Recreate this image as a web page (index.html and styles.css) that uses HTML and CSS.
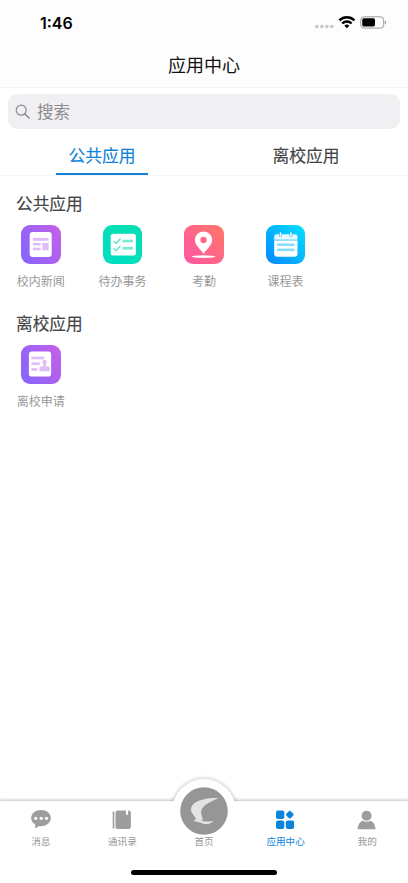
FILE: index.html
```html
<!DOCTYPE html>
<html lang="zh-CN">
<head>
    <meta charset="UTF-8">
    <meta name="viewport" content="width=device-width, initial-scale=1.0">
    <title>应用中心</title>
    <link rel="stylesheet" href="styles.css">
</head>
<body>
    <div class="page">
        <div class="status-bar">
            <span class="time">1:46</span>
            <svg class="status-icons" width="72" height="16" viewBox="0 0 72 16">
                <g fill="#c6c6c6">
                    <circle cx="2.8" cy="11.5" r="1.8"/>
                    <circle cx="7.8" cy="11.5" r="1.8"/>
                    <circle cx="12.8" cy="11.5" r="1.8"/>
                    <circle cx="17.8" cy="11.5" r="1.8"/>
                </g>
                <g fill="none" stroke="#000" stroke-width="2.4">
                    <path d="M25.4 5.3a10.8 10.8 0 0 1 15 0"/>
                    <path d="M28.2 8.5a6.7 6.7 0 0 1 9.4 0"/>
                </g>
                <path d="M32.9 13.2l-2.5-2.5a3.6 3.6 0 0 1 5 0z"/>
                <rect x="46.7" y="1.8" width="23" height="11.3" rx="3.4" fill="none" stroke="#9b9b9b"/>
                <rect x="48.2" y="3.3" width="12.8" height="8.3" rx="1.8"/>
                <path d="M70.8 5.6q1.3.4 1.3 1.9t-1.3 1.9z" fill="#9b9b9b"/>
            </svg>
        </div>
        <h1 class="title">应用中心</h1>

        <div class="search">
            <svg width="16" height="16" viewBox="0 0 16 16" fill="none" stroke="#8c8c90" stroke-width="1.2" stroke-linecap="round">
                <circle cx="6.2" cy="6.2" r="5"/>
                <path d="M9.9 9.9l4.2 4.1" stroke-width="1.6"/>
            </svg>
            <span>搜索</span>
        </div>

        <div class="tabs">
            <div class="tab active"><span>公共应用</span></div>
            <div class="tab"><span>离校应用</span></div>
        </div>

        <div class="section">
            <h2>公共应用</h2>
            <div class="apps">
                <div class="app">
                    <div class="icon purple">
                        <svg viewBox="0 0 40 40">
                            <rect x="8.8" y="7.1" width="22.3" height="25.2" rx="3" fill="#fff"/>
                            <g fill="#dfbdfb">
                                <rect x="12" y="13" width="16" height="3"/>
                                <rect x="12" y="18.2" width="8" height="2.6"/>
                                <rect x="12" y="23" width="8" height="2.6"/>
                                <rect x="21.6" y="18.2" width="6.4" height="7.4"/>
                            </g>
                        </svg>
                    </div>
                    <p>校内新闻</p>
                </div>
                <div class="app">
                    <div class="icon green">
                        <svg viewBox="0 0 40 40">
                            <rect x="7.8" y="8.8" width="25.5" height="22.2" rx="2.6" fill="#fff"/>
                            <g fill="#79ebd5">
                                <rect x="19.7" y="14.9" width="10.6" height="2.7"/>
                                <rect x="19.7" y="22.2" width="10.6" height="2.7"/>
                            </g>
                            <path d="M10.7 16.3l2.4 2.4 4.6-4.8M10.7 23.6l2.4 2.4 4.6-4.8" fill="none" stroke="#3fe2c4" stroke-width="1.2"/>
                        </svg>
                    </div>
                    <p>待办事务</p>
                </div>
                <div class="app">
                    <div class="icon pink">
                        <svg viewBox="0 0 40 40">
                            <path fill="#fff" fill-rule="evenodd" d="M19.8 6.5c-4.9 0-8.7 3.7-8.7 8.5 0 6.1 5.4 9 8.7 14.3 3.3-5.3 8.7-8.2 8.7-14.3 0-4.8-3.8-8.5-8.7-8.5zm0 5.5a3.2 3.2 0 1 1 0 6.4 3.2 3.2 0 0 1 0-6.4z"/>
                            <ellipse cx="19.8" cy="32" rx="12.2" ry="1.3" fill="#fff"/>
                        </svg>
                    </div>
                    <p>考勤</p>
                </div>
                <div class="app">
                    <div class="icon blue">
                        <svg viewBox="0 0 40 40">
                            <path d="M8.3 14.2V12a2.6 2.6 0 0 1 2.6-2.6h18.4a2.6 2.6 0 0 1 2.6 2.6v2.2z" fill="#e9faff"/>
                            <path d="M8.3 15.8h23.6v13.3a3 3 0 0 1-3 3H11.3a3 3 0 0 1-3-3z" fill="#fff"/>
                            <path d="M8.3 14.2h23.6v1.6H8.3z" fill="#a3e4ff"/>
                            <path d="M14.7 9v1.6M25.2 9v1.6" stroke="#39b9ff" stroke-width="3.2" stroke-linecap="round"/>
                            <path d="M14.7 8v3.2M25.2 8v3.2" stroke="#fff" stroke-width="1.5" stroke-linecap="round"/>
                            <g fill="#82dcfb">
                                <rect x="11.3" y="18.7" width="17.6" height="2.5"/>
                                <rect x="11.3" y="23.9" width="17.6" height="2.5"/>
                            </g>
                        </svg>
                    </div>
                    <p>课程表</p>
                </div>
            </div>
        </div>

        <div class="section">
            <h2>离校应用</h2>
            <div class="apps">
                <div class="app">
                    <div class="icon purple">
                        <svg viewBox="0 0 40 40">
                            <rect x="8" y="6.5" width="22.5" height="25.5" rx="3" fill="#fff"/>
                            <g fill="#dfbdfb">
                                <rect x="10.5" y="11.8" width="13" height="2.7"/>
                                <rect x="10.5" y="17.6" width="8.4" height="2.7"/>
                                <rect x="10.5" y="23.4" width="6" height="2.7"/>
                                <path d="M18.7 26.6v-3.4q0-1.5 1.6-1.5h1.6q1.1 0 .5-2.6a2.3 2.3 0 1 1 3 0q-.5 2.6.6 2.6h1.5q1.700 0 1.700 1.500v3.400z"/>
                            </g>
                        </svg>
                    </div>
                    <p>离校申请</p>
                </div>
            </div>
        </div>

        <div class="tabbar">
            <div class="hump"></div>
            <div class="bar-item">
                <svg width="24" height="24" viewBox="0 0 24 24">
                    <path fill="#9d9d9d" d="M12 2c5.600 0 9.800 3.500 9.800 8.100s-4.200 8.200-9.800 8.200q-1 0-2-.2l-3.900 2.500.1-4q-4-2.300-4-6.500C2.200 5.500 6.400 2 12 2z"/>
                    <g fill="#fff"><circle cx="6.700" cy="10.300" r="1.600"/><circle cx="12.200" cy="10.300" r="1.600"/><circle cx="17.500" cy="10.300" r="1.600"/></g>
                </svg>
                <span>消息</span>
            </div>
            <div class="bar-item">
                <svg width="24" height="24" viewBox="0 0 24 24" fill="#9d9d9d">
                    <rect x="2.700" y="3.300" width="1.600" height="17.400" rx=".8"/>
                    <path d="M7.800 2.600H16v4q1 .8 2.100 0v-4h.5q2.300.1 2.300 2.200v13.700q0 2.500-2.500 2.500H8Q5.500 21 5.500 18.500V4.800q0-2.200 2.300-2.200z"/>
                </svg>
                <span>通讯录</span>
            </div>
            <div class="bar-item home">
                <svg width="48" height="48" viewBox="0 0 48 48">
                    <circle cx="24" cy="24" r="23.800" fill="#969696"/>
                    <path fill="#e3e3e3" d="M38.500 11.200C29 10.400 11.500 13 11 22.500c-.1 4.500 5.600 7.500 4.800 10l-2.500 1.400 4.800 1.200c2.200.2 3.500 1.400 5.900 1.800 4 .5 7.800-.3 9.200-3.500-2.500 1.300-4.800 1-7.400 1.200-2 0-3.400-1-4.800-1.600l2.300-1c-1.500-2.200-2.500-4.400-2.100-7.800.6-5.200 8.600-9.800 17.300-13z"/>
                </svg>
                <span>首页</span>
            </div>
            <div class="bar-item active">
                <svg width="24" height="24" viewBox="0 0 24 24" fill="#0c84dc">
                    <rect x="2" y="2.600" width="8.300" height="8.300" rx="2"/>
                    <rect x="12.700" y="3.600" width="6.200" height="6.200" rx="1.300" transform="rotate(45 15.800 6.700)"/>
                    <rect x="2" y="12.600" width="8.300" height="8.300" rx="2"/>
                    <rect x="11.800" y="12.600" width="8.300" height="8.300" rx="2"/>
                </svg>
                <span>应用中心</span>
            </div>
            <div class="bar-item">
                <svg width="24" height="24" viewBox="0 0 24 24" fill="#9d9d9d">
                    <circle cx="11.600" cy="7.700" r="5"/>
                    <path d="M2.600 21.200c.5-5 2.200-7.300 5-8.500 2.300 1.500 5.700 1.500 8 0 2.800 1.200 4.500 3.500 5 8.500z"/>
                </svg>
                <span>我的</span>
            </div>
            <div class="home-indicator"></div>
        </div>
    </div>
</body>
</html>
```

FILE: styles.css
```css
* {
    box-sizing: border-box;
}

body {
    margin: 0;
    background: #fff;
    font-family: "Noto Sans CJK SC", sans-serif;
    color: #444;
}

h1, h2, p {
    margin: 0;
}

svg {
    display: block;
}

.page {
    display: flex;
    flex-direction: column;
    height: 883px;
    overflow: hidden;
}

.status-bar {
    display: flex;
    justify-content: space-between;
    align-items: center;
    height: 46px;
    padding: 0 22px 0 40px;
    background: #fdfdfd;
}

.time {
    font: 600 16px/20px Inter, sans-serif;
    color: #000;
}

.status-icons {
    overflow: visible;
}

.title {
    height: 42px;
    border-bottom: 1px solid #f2f2f2;
    background: #fdfdfd;
    font-size: 18px;
    font-weight: 400;
    line-height: 37px;
    text-align: center;
    color: #111;
}

.search {
    display: flex;
    align-items: center;
    gap: 6px;
    height: 35px;
    margin: 6px 8px 0;
    padding-left: 7px;
    border-radius: 9px;
    background: #f0f0f2;
    font-size: 16.5px;
    line-height: 35px;
    color: #8c8c90;
}

.tabs {
    display: flex;
    height: 47px;
    border-bottom: 1px solid #f5f5f5;
}

.tab {
    flex: 1;
    display: flex;
    justify-content: center;
    font-size: 16.8px;
    line-height: 52px;
    -webkit-text-stroke: 0.15px;
}

.tab span {
    width: 92px;
    height: 46px;
    text-align: center;
}

.tab.active span {
    border-bottom: 2px solid #0f82d8;
    color: #0f82d8;
}

.section {
    height: 120.3px;
    padding-top: 16px;
}

.section h2 {
    padding-left: 16px;
    font-size: 16.7px;
    font-weight: 400;
    line-height: 23px;
    -webkit-text-stroke: 0.15px;
}

.apps {
    display: grid;
    grid-template-columns: repeat(5, 1fr);
    margin-top: 9.7px;
}

.app {
    display: flex;
    flex-direction: column;
    align-items: center;
}

.app p {
    margin-top: 7.5px;
    font-size: 12px;
    line-height: 18px;
    color: #999;
}

.icon {
    width: 39.5px;
    height: 39.5px;
    border-radius: 9px;
}

.purple {
    background: linear-gradient(60deg, #8c64fa 15%, #c360e8 95%);
}

.green {
    background: linear-gradient(45deg, #00dfc4, #08deb0);
}

.pink {
    background: linear-gradient(45deg, #ff55a5, #ff7867);
}

.blue {
    background: linear-gradient(45deg, #0887ff, #00e2ff);
}

.tabbar {
    position: relative;
    display: flex;
    height: 82px;
    margin-top: auto;
    background: #fff;
    box-shadow: 0 -1px 3px rgba(0, 0, 0, 0.25);
}

/* white bump behind the home button, clipped at the bar's top edge */
.hump {
    position: absolute;
    left: 50%;
    top: -30px;
    width: 80px;
    height: 30px;
    margin-left: -40px;
    overflow: hidden;
}

.hump::before {
    content: "";
    position: absolute;
    left: 8px;
    top: 8px;
    width: 64px;
    height: 64px;
    border-radius: 50%;
    background: #fff;
    box-shadow: 0 0 4px rgba(0, 0, 0, 0.3);
}

.bar-item {
    position: relative;
    flex: 1;
    display: flex;
    flex-direction: column;
    align-items: center;
    padding-top: 7px;
    font-size: 9.6px;
    line-height: 14px;
    color: #999;
}

.bar-item span {
    margin-top: 2px;
}

.bar-item.home {
    padding-top: 0;
}

.home svg {
    margin-top: -14px;
}

.home span {
    margin-top: -1px;
}

.bar-item.active {
    color: #0c84dc;
}

.home-indicator {
    position: absolute;
    left: 50%;
    bottom: 8px;
    width: 146px;
    height: 5px;
    margin-left: -73px;
    border-radius: 3px;
    background: #000;
}
```
